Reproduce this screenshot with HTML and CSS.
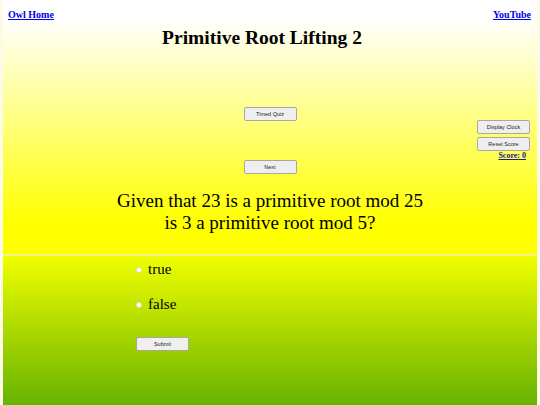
FILE: index.html
```html
<!DOCTYPE html>
<html>
<head>
<meta charset="utf-8">
<link rel="stylesheet" href="styles.css">
</head>
<body>
<div class="page">
  <section class="top">
    <header class="nav">
      <a href="#" class="navlink">Owl Home</a>
      <a href="#" class="navlink">YouTube</a>
    </header>
    <h1 class="title">Primitive Root Lifting 2</h1>
    <div class="controls">
      <div class="col-left"></div>
      <div class="col-center">
        <button class="btn">Timed Quiz</button>
        <button class="btn">Next</button>
      </div>
      <div class="col-right">
        <button class="btn">Display Clock</button>
        <button class="btn">Reset Score</button>
        <a href="#" class="score">Score: 0</a>
      </div>
    </div>
    <p class="question">Given that 23 is a primitive root mod 25<br>is 3 a primitive root mod 5?</p>
  </section>
  <section class="bottom">
    <label class="answer"><input type="radio" name="a" class="radio">true</label>
    <label class="answer"><input type="radio" name="a" class="radio">false</label>
    <button class="btn submit">Submit</button>
  </section>
</div>
</body>
</html>
```

FILE: styles.css
```css
html, body {
  margin: 0;
  padding: 0;
}
body {
  background: #fbfbe6;
  font-family: "Liberation Serif", "Times New Roman", serif;
}
.page {
  margin: 0 3px;
  height: 405px;
  display: flex;
  flex-direction: column;
}
.top {
  height: 254px;
  box-sizing: border-box;
  background: linear-gradient(to bottom, #ffffff 0%, #ffffff 7%, #ffff00 88%, #ffff00 100%);
  display: flex;
  flex-direction: column;
}
.nav {
  display: flex;
  justify-content: space-between;
  padding: 9px 6px 0 5px;
  font-size: 10px;
  line-height: 12px;
}
.navlink {
  color: #0000ee;
  font-weight: bold;
}
.title {
  margin: 5px 0 0;
  padding-right: 16px;
  text-align: center;
  font-size: 19.5px;
  line-height: 24px;
  font-weight: bold;
  color: #000;
}
.controls {
  margin-top: 57px;
  display: grid;
  grid-template-columns: 1fr auto 1fr;
}
.col-center {
  display: flex;
  flex-direction: column;
  align-items: center;
  gap: 39px;
}
.col-right {
  display: flex;
  flex-direction: column;
  align-items: flex-end;
  padding-top: 13px;
  padding-right: 7px;
  gap: 3px;
}
.btn {
  width: 53px;
  height: 14px;
  box-sizing: border-box;
  padding: 0;
  background: #efefef;
  border: 1px solid #a8a8a0;
  border-radius: 2px;
  font-family: "Liberation Sans", Arial, sans-serif;
  font-size: 5.5px;
  color: #222;
  line-height: 12px;
}
.score {
  margin-top: -3px;
  margin-right: 4px;
  font-weight: bold;
  font-size: 8px;
  line-height: 10px;
  color: #1c1c8a;
}
.question {
  margin: 16px 0 0;
  text-align: center;
  font-size: 19px;
  line-height: 22px;
  color: #000;
}
.bottom {
  flex: 1;
  border-top: 2px solid #f4f488;
  background: linear-gradient(to bottom, #f0ff00 0%, #66b300 100%);
  display: flex;
  flex-direction: column;
  align-items: flex-start;
  padding-left: 130px;
  padding-top: 4px;
}
.answer {
  display: flex;
  align-items: center;
  font-size: 15px;
  line-height: 18px;
  color: #000;
  margin-bottom: 17px;
}
.radio {
  appearance: none;
  -webkit-appearance: none;
  width: 6px;
  height: 6px;
  margin: 2px 6px 0 3px;
  border-radius: 50%;
  background: #fff;
  border: 1px solid #e0e0c0;
  box-sizing: border-box;
}
.submit {
  margin-top: 7px;
  margin-left: 3px;
}
```
